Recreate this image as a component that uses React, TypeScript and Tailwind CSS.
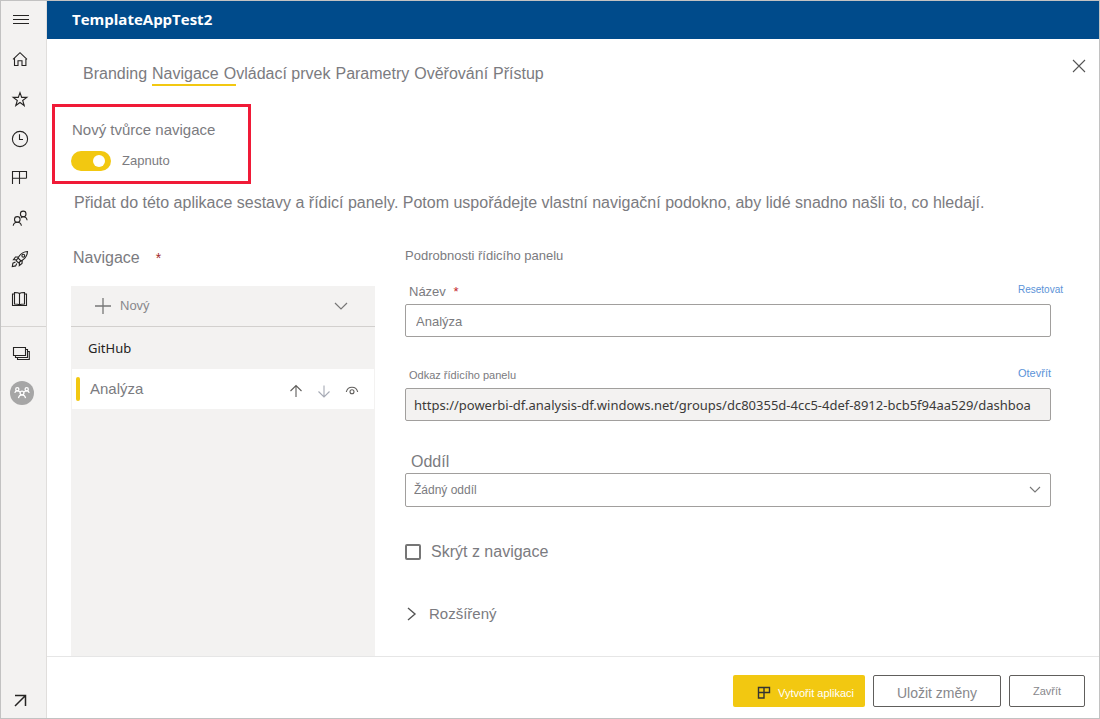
import { useState } from "react";
import type { ReactNode } from "react";

const tabs = ["Branding", "Navigace", "Ovládací prvek", "Parametry", "Ověřování", "Přístup"];

const Icon = ({ children }: { children: ReactNode }) => (
  <svg
    className="h-5 w-5 overflow-visible"
    viewBox="0 0 20 20"
    fill="none"
    stroke="currentColor"
    strokeWidth="1.1"
    aria-hidden="true"
  >
    {children}
  </svg>
);

const mainLinks = [
  {
    label: "Home",
    icon: <path d="M3 10.300 10 3.700l7 6.600M4.500 9v7.500H8v-4.800h4v4.800h3.900V9" />,
  },
  {
    label: "Favorites",
    icon: <path d="m10 3.600 1.700 4.800h5.100l-4.100 3.100 1.500 5L10 13.500l-4.200 3 1.500-5-4.100-3.100h5.100z" />,
  },
  {
    label: "Recent",
    icon: (
      <>
        <circle cx="10" cy="10" r="7.6" />
        <path d="M9.500 5.300v5.200H13" />
      </>
    ),
  },
  {
    label: "Apps",
    icon: <path d="M2.500 15V2.500h14v6.700M9.500 2.500V15M2.500 9.200h14" />,
  },
  {
    label: "Shared with me",
    icon: (
      <>
        <circle cx="13.2" cy="4.9" r="2.8" />
        <circle cx="7.3" cy="10.4" r="2.8" />
        <path d="M3.200 16.700c.3-2.200 2-3.500 4.100-3.500s3.800 1.300 4.100 3.500M11 9c.6-.8 1.300-1.300 2.200-1.300 2.100 0 3.600 1.300 3.900 3.500" />
      </>
    ),
  },
  {
    label: "Learn",
    icon: (
      <>
        <path d="M17.500 2.500c-4 .2-7.200 2.200-9.500 6.500l3 3c4.300-2.300 6.300-5.500 6.500-9.500zM8.800 7.700l-3.300.3-2 2.700 3.600-.2M12.300 11.200l-.3 3.300-2.700 2 .2-3.600M8 9l-1.800 2.600 2.200 2.200L11 12M5.500 13l-2.600 1.200-.6 3.300 3.300-.6L6.800 14.500" />
        <circle cx="13.3" cy="6.7" r="1.4" />
      </>
    ),
  },
  {
    label: "Workspaces",
    icon: (
      <path d="M9.500 4.500v11.500M9.500 4.500C8.500 3.500 7 3.500 4.500 3.500V15c2.500 0 4 0 5 1 1-1 2.500-1 5-1V3.500c-2.500 0-4 0-5 1M4.500 5h-2v11.500h14V5h-2" />
    ),
  },
];

function NavButton({ label, children }: { label: string; children: ReactNode }) {
  return (
    <button aria-label={label} className="flex h-10 w-full items-center justify-center">
      {children}
    </button>
  );
}

function Sidebar() {
  return (
    <nav className="flex w-[46px] shrink-0 flex-col border-r border-[#e0dedc] bg-[#f3f2f1] text-[#252423]">
      <div className="w-[38px]">
        <button aria-label="Menu" className="flex h-[38px] w-full items-center justify-center">
          <Icon>
            <path d="M3 5.500h16M3 9.500h16M3 13.500h16" />
          </Icon>
        </button>
        {mainLinks.map((link) => (
          <NavButton key={link.label} label={link.label}>
            <Icon>{link.icon}</Icon>
          </NavButton>
        ))}
      </div>
      <div className="mt-[7px] border-t border-[#d6d4d2] pt-1.5">
        <div className="w-[38px]">
          <NavButton label="My workspace">
            <Icon>
              <path d="M3.500 4.500h12v8h-12zM15.500 6.500h2v8h-12v-2M17.500 8.500h1.800v8H7.500v-2" />
            </Icon>
          </NavButton>
        </div>
        <div className="w-[42px]">
          <NavButton label="Team workspace">
            <svg className="h-6 w-6" viewBox="0 0 24 24" fill="none" stroke="#fff" strokeWidth="1.3">
              <circle cx="12" cy="12" r="12" fill="#a6a6a6" stroke="none" />
              <circle cx="7.3" cy="8.3" r="1.6" />
              <circle cx="16.7" cy="8.3" r="1.6" />
              <circle cx="12" cy="12" r="1.9" />
              <path d="M4.800 11.800c.3-1.200 1.200-1.900 2.500-1.900 1.100 0 1.900.3 2.700 1M19.200 11.800c-.3-1.200-1.200-1.900-2.500-1.900-1.100 0-1.900.3-2.700 1M8.500 17.200c.3-2 1.600-3.300 3.500-3.300s3.200 1.300 3.500 3.300" />
            </svg>
          </NavButton>
        </div>
      </div>
      <div className="mt-auto w-[38px]">
        <button aria-label="Expand" className="flex h-9 w-full items-center justify-center">
          <svg className="h-5 w-5" viewBox="0 0 20 20" fill="none" stroke="currentColor" strokeWidth="1.5">
            <path d="M5 5.500h10.500V16M15.500 5.500 5 16" />
          </svg>
        </button>
      </div>
    </nav>
  );
}

function NavigationList() {
  return (
    <section className="flex w-[304px] shrink-0 flex-col">
      <h2 className="flex h-[54px] items-center gap-4 pb-0.5 pl-0.5 text-[16px]">
        Navigace <span className="text-[14px] text-[#a4262c]">*</span>
      </h2>
      <div className="flex-1 bg-[#f3f2f1]">
        <button className="flex h-[41px] w-full items-center border-b border-[#d2d0ce] pr-6 pl-[22px] text-[13px] text-[#88888c]">
          <svg className="h-5 w-5" viewBox="0 0 20 20" fill="none" stroke="#777" strokeWidth="1.3">
            <path d="M2 10h16M10 2v16" />
          </svg>
          <span className="ml-[7px]">Nový</span>
          <svg className="ml-auto h-5 w-5" viewBox="0 0 20 20" fill="none" stroke="#777" strokeWidth="1.2">
            <path d="m4 7 6 6 6-6" />
          </svg>
        </button>
        <button className="flex h-[42px] w-full items-center pt-0.5 pl-[17px] font-['Noto_Sans',sans-serif] text-[13px] text-[#252423]">
          GitHub
        </button>
        <div className="mx-px flex h-10 items-center bg-white pr-3 pl-1">
          <span className="h-6 w-1 rounded-sm bg-[#f2c811]" />
          <button className="ml-2.5 text-[15px]">Analýza</button>
          <div className="ml-auto flex gap-2 pt-0.5">
            <button aria-label="Nahoru" className="h-5 w-5 text-[#605e5c]">
              <Icon>
                <path d="M10 17V5.500M4.500 11 10 5.500l5.500 5.500" />
              </Icon>
            </button>
            <button aria-label="Dolů" className="h-5 w-5 text-[#a6aab5]">
              <Icon>
                <path d="M10 5.500V17M4.500 11.500 10 17l5.500-5.500" />
              </Icon>
            </button>
            <button aria-label="Zobrazit" className="h-5 w-5 text-[#605e5c]">
              <Icon>
                <path d="M4.300 12c.7-3.200 2.800-4.800 5.700-4.800s5 1.600 5.700 4.800" />
                <circle cx="10" cy="11.8" r="2" />
              </Icon>
            </button>
          </div>
        </div>
      </div>
    </section>
  );
}

function Details() {
  const [name, setName] = useState("Analýza");
  const [hidden, setHidden] = useState(false);

  return (
    <section className="min-w-0 flex-1 pt-3.5">
      <h2 className="text-[13px] leading-5">Podrobnosti řídicího panelu</h2>

      <div className="mt-4 flex h-[22px] items-start justify-between pl-1">
        <label htmlFor="name" className="text-[13px] leading-5">
          Název <span className="ml-1 text-[#c4262c]">*</span>
        </label>
        <a href="#reset" className="-mr-3 text-[10px] leading-4 text-[#5b93d8]">
          Resetovat
        </a>
      </div>
      <input
        id="name"
        type="text"
        value={name}
        onChange={(e) => setName(e.target.value)}
        className="block h-[33px] w-full rounded-xs border border-[#a19f9d] px-2.5 pt-0.5 text-[13px]"
      />

      <div className="mt-7 flex h-[23px] items-start justify-between pl-1">
        <label htmlFor="link" className="text-[11px] leading-5">
          Odkaz řídicího panelu
        </label>
        <a href="#open" className="text-[11px] leading-4 text-[#5b93d8]">
          Otevřít
        </a>
      </div>
      <input
        id="link"
        type="text"
        readOnly
        value="https://powerbi-df.analysis-df.windows.net/groups/dc80355d-4cc5-4def-8912-bcb5f94aa529/dashboa"
        className="block h-[33px] w-full rounded-xs border border-[#a19f9d] bg-[#f3f2f1] px-2 font-['Noto_Sans',sans-serif] text-[13px] text-[#3b3a39]"
      />

      <label htmlFor="section" className="mt-[30px] block pl-1.5 text-[16px] leading-[22px]">
        Oddíl
      </label>
      <div className="relative">
        <select
          id="section"
          className="block h-[34px] w-full appearance-none rounded-xs border border-[#a19f9d] bg-white px-2 text-[12px]"
        >
          <option>Žádný oddíl</option>
        </select>
        <svg
          className="pointer-events-none absolute top-[7px] right-1.5 h-5 w-5"
          viewBox="0 0 20 20"
          fill="none"
          stroke="#777"
          strokeWidth="1.1"
        >
          <path d="m5 7 5 5 5-5" />
        </svg>
      </div>

      <label className="mt-[35px] flex h-5 items-center gap-2.5 text-[16px]">
        <input
          type="checkbox"
          checked={hidden}
          onChange={(e) => setHidden(e.target.checked)}
          className="h-4 w-4 appearance-none rounded-xs border-2 border-[#767676] checked:bg-[#767676]"
        />
        Skrýt z navigace
      </label>

      <button className="mt-10 flex h-6 items-center gap-3 text-[15px]">
        <svg className="h-4 w-3" viewBox="0 0 12 16" fill="none" stroke="#555" strokeWidth="1.4">
          <path d="m3 2 7 6-7 6" />
        </svg>
        Rozšířený
      </button>
    </section>
  );
}

export default function App() {
  const [on, setOn] = useState(true);

  return (
    <div className="flex min-h-screen border border-[#c2c2c2] bg-white font-['Liberation_Sans',Arial,sans-serif] text-[#7b7b80]">
      <Sidebar />
      <div className="flex min-w-0 flex-1 flex-col">
        <header className="flex h-[38px] items-center bg-[#004b8b] pb-0.5 pl-[25px]">
          <h1 className="font-['Open_Sans',sans-serif] text-[15px] font-bold text-white">TemplateAppTest2</h1>
        </header>

        <main className="flex flex-1 flex-col">
          <div className="flex h-[65px] items-center justify-between pt-1 pr-2.5 pl-9">
            <div role="tablist" className="flex gap-[5px] text-[16px]">
              {tabs.map((tab) => (
                <button key={tab} role="tab" aria-selected={tab === "Navigace"} className="relative leading-6">
                  {tab}
                  {tab === "Navigace" && (
                    <span className="absolute bottom-0 left-0 h-0.5 w-[84px] bg-[#f2c811]" />
                  )}
                </button>
              ))}
            </div>
            <button aria-label="Zavřít dialog" className="mb-4 h-5 w-5 text-[#555]">
              <Icon>
                <path d="m4 4 12 12M16 4 4 16" />
              </Icon>
            </button>
          </div>

          <div className="ml-[5px] h-20 w-[199px] border-3 border-[#f01a37] pt-[13px] pl-4">
            <p className="pl-px text-[15px] leading-5">Nový tvůrce navigace</p>
            <label className="mt-[11px] flex h-5 items-center text-[13px]">
              <input
                type="checkbox"
                role="switch"
                checked={on}
                onChange={(e) => setOn(e.target.checked)}
                className="h-5 w-10 appearance-none rounded-full bg-[#c8c6c4] before:ml-1 before:mt-1 before:block before:h-3 before:w-3 before:rounded-full before:bg-white checked:bg-[#f2c811] checked:before:ml-[22px]"
              />
              <span className="ml-[11px]">Zapnuto</span>
            </label>
          </div>

          <p className="mt-[7px] pr-6 pl-[27px] text-[16px] leading-6">
            Přidat do této aplikace sestavy a řídicí panely. Potom uspořádejte vlastní navigační podokno, aby lidé snadno našli to, co hledají.
          </p>

          <div className="mt-[17px] flex flex-1 gap-[30px] pr-12 pl-6">
            <NavigationList />
            <Details />
          </div>
        </main>

        <footer className="flex h-[62px] items-start justify-end gap-2 border-t border-[#e6e6e6] pt-[18px] pr-3.5">
          <button className="flex h-8 w-[132px] items-center justify-end gap-1.5 rounded-xs bg-[#f2c811] pt-1 pr-[11px] text-[11px] text-white">
            <svg className="h-4 w-4" viewBox="0 0 16 16" fill="none" stroke="#333" strokeWidth="1.4">
              <path d="M2.500 2.500h11v5h-11zM8 2.500v10.500H2.500V2.500" />
            </svg>
            Vytvořit aplikaci
          </button>
          <button className="h-8 w-32 rounded-xs border border-[#605e5c] pt-1 text-[14px] text-[#88888c]">
            Uložit změny
          </button>
          <button className="h-8 w-[76px] rounded-xs border border-[#605e5c] text-[11px] text-[#88888c]">Zavřít</button>
        </footer>
      </div>
    </div>
  );
}
